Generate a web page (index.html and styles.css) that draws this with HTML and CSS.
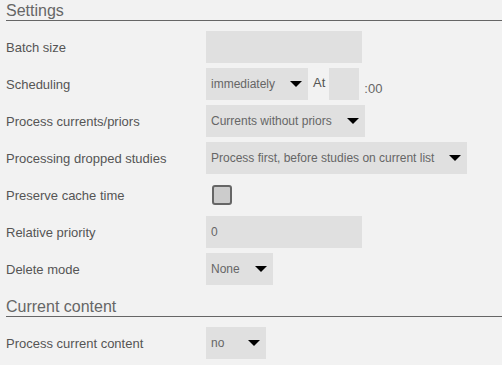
FILE: index.html
```html
<!DOCTYPE html>
<html lang="en">
<head>
    <meta charset="UTF-8">
    <title>Settings</title>
    <link rel="stylesheet" href="styles.css">
</head>
<body>
    <div class="panel">
        <h3 class="section-title">Settings</h3>

        <div class="row">
            <label class="label">Batch size</label>
            <div class="input wide"></div>
        </div>

        <div class="row">
            <label class="label">Scheduling</label>
            <div class="select"><span>immediately</span><i class="arrow"></i></div>
            <span class="at">At</span>
            <div class="input tiny"></div>
            <span class="suffix">:00</span>
        </div>

        <div class="row">
            <label class="label">Process currents/priors</label>
            <div class="select"><span>Currents without priors</span><i class="arrow"></i></div>
        </div>

        <div class="row">
            <label class="label">Processing dropped studies</label>
            <div class="select"><span>Process first, before studies on current list</span><i class="arrow"></i></div>
        </div>

        <div class="row">
            <label class="label">Preserve cache time</label>
            <span class="checkbox"></span>
        </div>

        <div class="row">
            <label class="label">Relative priority</label>
            <div class="input wide">0</div>
        </div>

        <div class="row">
            <label class="label">Delete mode</label>
            <div class="select"><span>None</span><i class="arrow"></i></div>
        </div>

        <h3 class="section-title second">Current content</h3>

        <div class="row">
            <label class="label">Process current content</label>
            <div class="select"><span>no</span><i class="arrow"></i></div>
        </div>
    </div>
</body>
</html>
```

FILE: styles.css
```css
body {
    margin: 0;
    background-color: #f2f2f2;
    font-family: "Liberation Sans", Arial, sans-serif;
    color: #555;
}

.panel {
    padding-left: 6px;
}

.section-title {
    margin: 0 0 10px 0;
    height: 20px;
    font-size: 16px;
    font-weight: normal;
    line-height: 22px;
    color: #666;
    border-bottom: 1px solid #666;
    box-sizing: content-box;
}

.section-title.second {
    margin-top: 11px;
}

.row {
    display: flex;
    align-items: center;
    height: 32px;
    margin-bottom: 5px;
}

.label {
    width: 200px;
    font-size: 13px;
}

.input {
    height: 32px;
    background-color: #e0e0e0;
    font-size: 12px;
    line-height: 32px;
    padding-left: 5px;
    box-sizing: border-box;
    color: #666;
}

.input.wide {
    width: 156px;
}

.input.tiny {
    width: 30px;
}

.select {
    display: flex;
    align-items: center;
    justify-content: space-between;
    min-width: 60px;
    height: 32px;
    padding: 0 6px 0 5px;
    box-sizing: border-box;
    background-color: #e0e0e0;
    font-size: 12px;
    color: #666;
}

.arrow {
    margin-left: 15px;
    width: 0;
    height: 0;
    border-left: 6px solid transparent;
    border-right: 6px solid transparent;
    border-top: 6px solid #000;
}

.at {
    margin: 0 4px 0 5px;
    font-size: 13px;
    padding-bottom: 4px;
}

.suffix {
    margin-left: 5px;
    font-size: 13px;
    padding-top: 8px;
    color: #666;
}

.checkbox {
    width: 16px;
    height: 16px;
    margin-left: 6px;
    background-color: #ccc;
    border: 2px solid #666;
    border-radius: 3px;
}
```
